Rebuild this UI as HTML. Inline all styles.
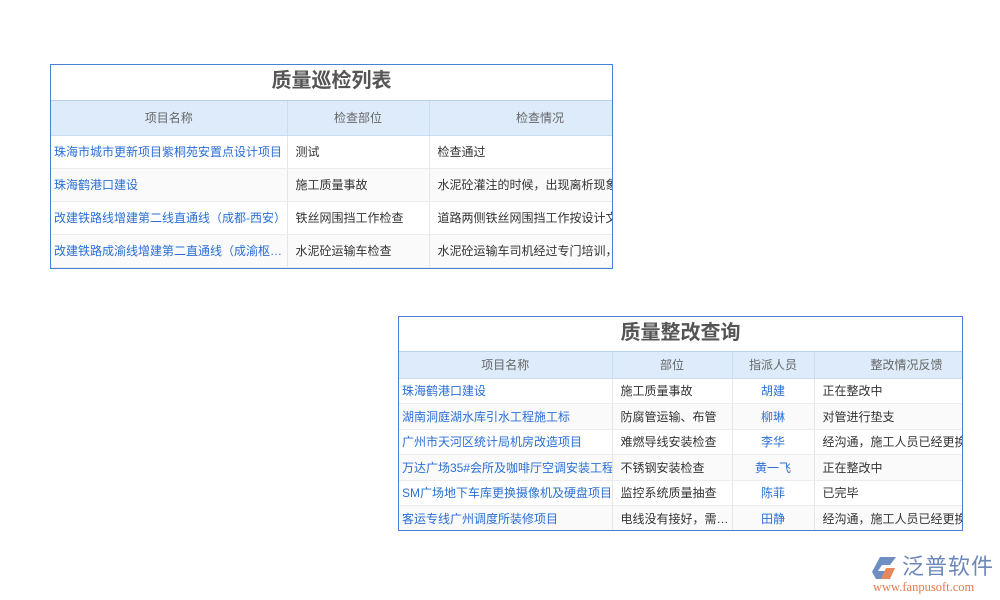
<!DOCTYPE html><html><head><meta charset="utf-8"><style>
body{margin:0;width:1000px;height:600px;background:#fff;position:relative;overflow:hidden;font-family:"Liberation Sans","Noto Sans CJK SC",sans-serif;}
.box{position:absolute;border:1px solid #4a7fd6;background:#fff;overflow:hidden;box-sizing:border-box}
.t{text-align:center;font-weight:bold;color:#555;}
table{border-collapse:collapse;table-layout:fixed;font-size:12px;}
td,th{white-space:nowrap;overflow:hidden;text-overflow:ellipsis;border-right:1px solid #e6e6e6;border-bottom:1px solid #ececec;padding:0 0 0 8px;color:#333;font-weight:normal}
th{background:#ddebfa;color:#666;text-align:center;border-color:#c8dcf2;padding:0}
td.l{color:#2a6fd6;padding-left:3px}
td.c{text-align:center;color:#2a6fd6;padding:0}
tr.o td{background:#fafafa}
</style></head><body>
<div class="box" style="left:50px;top:64px;width:563px;height:205px">
<div class="t" style="height:35px;line-height:33px;font-size:20px;border-bottom:1px solid #b8d0ee">质量巡检列表</div>
<table style="width:600px"><colgroup><col style="width:236px"><col style="width:142px"><col style="width:222px"></colgroup>
<tr style="height:34px"><th>项目名称</th><th>检查部位</th><th>检查情况</th></tr>
<tr style="height:33px"><td class="l">珠海市城市更新项目紫桐苑安置点设计项目</td><td>测试</td><td>检查通过</td></tr>
<tr style="height:33px" class="o"><td class="l">珠海鹤港口建设</td><td>施工质量事故</td><td>水泥砼灌注的时候，出现离析现象</td></tr>
<tr style="height:33px"><td class="l">改建铁路线增建第二线直通线（成都-西安）</td><td>铁丝网围挡工作检查</td><td>道路两侧铁丝网围挡工作按设计文件</td></tr>
<tr style="height:33px" class="o"><td class="l">改建铁路成渝线增建第二直通线（成渝枢纽）</td><td>水泥砼运输车检查</td><td>水泥砼运输车司机经过专门培训，</td></tr>
</table></div>
<div class="box" style="left:398px;top:316px;width:565px;height:215px">
<div class="t" style="height:34px;line-height:32px;font-size:20px;border-bottom:1px solid #b8d0ee">质量整改查询</div>
<table style="width:600px"><colgroup><col style="width:213px"><col style="width:120px"><col style="width:82px"><col style="width:185px"></colgroup>
<tr style="height:26px"><th>项目名称</th><th>部位</th><th>指派人员</th><th>整改情况反馈</th></tr>
<tr style="height:25.5px"><td class="l">珠海鹤港口建设</td><td>施工质量事故</td><td class="c">胡建</td><td>正在整改中</td></tr>
<tr style="height:25.5px" class="o"><td class="l">湖南洞庭湖水库引水工程施工标</td><td>防腐管运输、布管</td><td class="c">柳琳</td><td>对管进行垫支</td></tr>
<tr style="height:25.5px"><td class="l">广州市天河区统计局机房改造项目</td><td>难燃导线安装检查</td><td class="c">李华</td><td>经沟通，施工人员已经更换，</td></tr>
<tr style="height:25.5px" class="o"><td class="l" style="text-overflow:clip">万达广场35#会所及咖啡厅空调安装工程</td><td>不锈钢安装检查</td><td class="c">黄一飞</td><td>正在整改中</td></tr>
<tr style="height:25.5px"><td class="l" style="text-overflow:clip">SM广场地下车库更换摄像机及硬盘项目</td><td>监控系统质量抽查</td><td class="c">陈菲</td><td>已完毕</td></tr>
<tr style="height:25.5px" class="o"><td class="l">客运专线广州调度所装修项目</td><td>电线没有接好，需要重新</td><td class="c">田静</td><td>经沟通，施工人员已经更换，</td></tr>
</table></div>
<svg style="position:absolute;left:872px;top:556px" width="28" height="24" viewBox="0 0 28 24"><path d="M8 1h16l-6 8H10l-4 6h10l-4 8H4L0 16z" fill="#6f8fc4"/><path d="M14 12h9l-5 11h-9z" fill="#e8885a"/></svg>
<div style="position:absolute;left:902px;top:551px;font-size:22px;color:#6d87b8;letter-spacing:1px;font-family:'Noto Sans CJK SC',sans-serif;line-height:28px">泛普软件</div>
<div style="position:absolute;left:873px;top:580px;font-size:12.5px;color:#e07a50;font-family:'Liberation Serif',serif;line-height:14px">www.fanpusoft.com</div>
</body></html>
